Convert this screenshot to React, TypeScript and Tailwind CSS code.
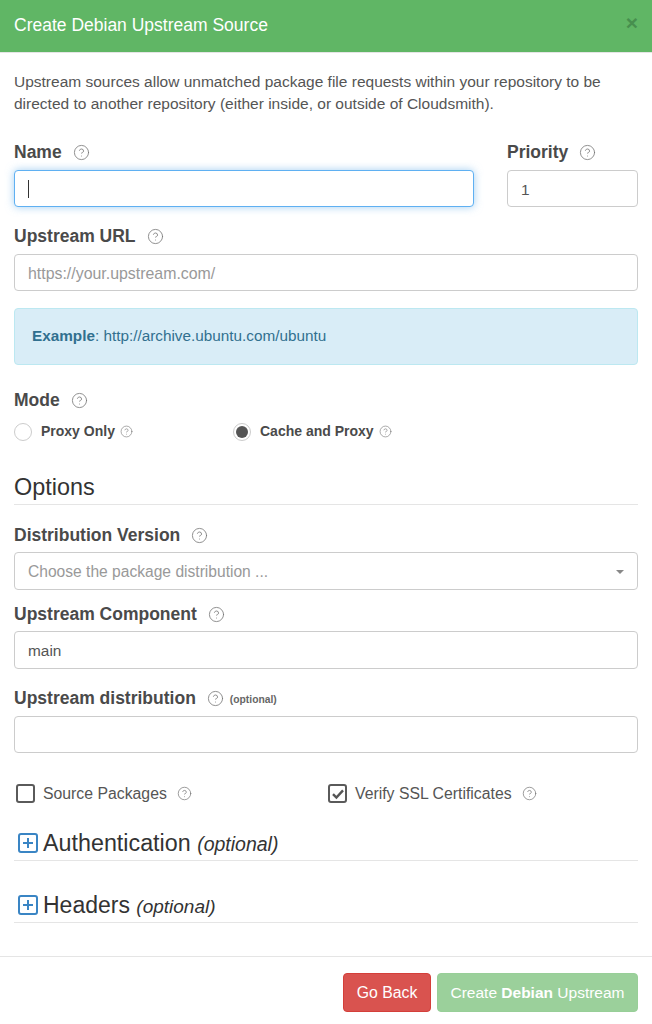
import { CircleHelp } from "lucide-react";

function Help({ size = 17, className = "" }: { size?: number; className?: string }) {
  return <CircleHelp size={size} strokeWidth={1.15} className={`shrink-0 text-[#777] ${className}`} />;
}

function Label({ text, className = "", extra }: { text: string; className?: string; extra?: React.ReactNode }) {
  return (
    <div className={`flex items-center text-[17.5px] leading-[20px] font-bold text-[#4a4a4a] ${className}`}>
      <span>{text}</span>
      <Help className="ml-[11px]" />
      {extra}
    </div>
  );
}

function Field({
  placeholder,
  value,
  focused,
  tall,
  className = "",
}: {
  placeholder?: string;
  value?: string;
  focused?: boolean;
  tall?: boolean;
  className?: string;
}) {
  const border = focused ? "border-[#5fb0f2] shadow-[0_0_8px_rgba(102,175,233,0.6)]" : "border-[#ccc]";
  const height = tall ? "h-[38px]" : "h-[37px]";
  return (
    <input
      readOnly
      placeholder={placeholder}
      value={value ?? ""}
      className={`block w-full rounded-[4px] border bg-white px-[13px] pt-[2px] text-[15.4px] text-[#555] outline-none placeholder:text-[15.9px] placeholder:text-[#999] ${border} ${height} ${className}`}
    />
  );
}

function Plus() {
  return (
    <svg width="20" height="20" viewBox="0 0 20 20" className="shrink-0">
      <rect x="1" y="1" width="18" height="18" rx="2" fill="none" stroke="#3a85c4" strokeWidth="2" />
      <path d="M10 5v10M5 10h10" stroke="#3a85c4" strokeWidth="2" />
    </svg>
  );
}

function Check({ checked }: { checked?: boolean }) {
  return (
    <div className="flex h-[19px] w-[19px] shrink-0 items-center justify-center rounded-[3px] border-2 border-[#5a5a5a] bg-white">
      {checked && (
        <svg width="14" height="12" viewBox="0 0 14 12">
          <path d="M2 6.2l3.4 3.4L12 2.4" fill="none" stroke="#555" strokeWidth="2.4" />
        </svg>
      )}
    </div>
  );
}

function Radio({ checked }: { checked?: boolean }) {
  return (
    <div className="flex h-[18px] w-[18px] shrink-0 items-center justify-center rounded-full border border-[#ccc] bg-white">
      {checked && <div className="h-[12px] w-[12px] rounded-full bg-[#555]" />}
    </div>
  );
}

export default function App() {
  return (
    <div className="flex h-[1024px] w-[652px] flex-col overflow-hidden bg-white font-['Liberation_Sans',Arial,sans-serif] text-[14px] text-[#555]">
      <header className="flex h-[53px] shrink-0 items-center justify-between border-b border-[#e5e5e5] bg-[#60b665] px-[14px]">
        <h1 className="mb-[3px] text-[17.5px] leading-[20px] text-white">Create Debian Upstream Source</h1>
        <span className="mb-[7px] text-[21px] leading-none font-bold text-[#478f4e]">×</span>
      </header>

      <main className="flex-1 px-[14px]">
        <p className="mt-[18px] text-[15.5px] leading-[22px] text-[#555]">
          Upstream sources allow unmatched package file requests within your repository to be directed to another
          repository (either inside, or outside of Cloudsmith).
        </p>

        <div className="mt-[27px] flex gap-[33px]">
          <div className="w-[460px]">
            <Label text="Name" />
            <div className="relative mt-[8px]">
              <Field focused />
              <div className="absolute top-[10px] left-[14px] h-[18px] w-px bg-[#333]" />
            </div>
          </div>
          <div className="w-[131px]">
            <Label text="Priority" />
            <Field value="1" className="mt-[8px]" />
          </div>
        </div>

        <Label text="Upstream URL" className="mt-[19px]" />
        <Field placeholder="https://your.upstream.com/" className="mt-[8px]" />

        <div className="mt-[17px] flex h-[57px] items-center rounded-[4px] border border-[#bce8f1] bg-[#d9edf7] px-[17px] text-[15.3px] text-[#31708f]">
          <span>
            <b>Example</b>: http://archive.ubuntu.com/ubuntu
          </span>
        </div>

        <Label text="Mode" className="mt-[25px]" />
        <div className="mt-[11px] flex items-center text-[14px] font-bold text-[#4a4a4a]">
          <div className="flex w-[219px] items-center">
            <Radio />
            <span className="ml-[9px]">Proxy Only</span>
            <Help size={13} className="ml-[5px]" />
          </div>
          <div className="flex items-center">
            <Radio checked />
            <span className="ml-[9px]">Cache and Proxy</span>
            <Help size={13} className="ml-[5px]" />
          </div>
        </div>

        <h2 className="mt-[30px] border-b border-[#e5e5e5] pb-[2px] text-[23.4px] leading-[30px] text-[#333]">Options</h2>

        <Label text="Distribution Version" className="mt-[20px]" />
        <div className="mt-[7px] flex h-[38px] items-center justify-between rounded-[4px] border border-[#ccc] bg-white px-[13px] pt-[2px] text-[15.6px] text-[#999]">
          <span>Choose the package distribution ...</span>
          <div className="h-0 w-0 border-x-[4px] border-t-[4px] border-x-transparent border-t-[#888]" />
        </div>

        <Label text="Upstream Component" className="mt-[14px]" />
        <Field value="main" tall className="mt-[7px]" />

        <Label
          text="Upstream distribution"
          className="mt-[19px]"
          extra={<span className="ml-[6px] translate-y-[2px] text-[10.3px] leading-[12px] font-bold text-[#666]">(optional)</span>}
        />
        <Field className="mt-[8px]" />

        <div className="mt-[30px] flex items-center text-[15.8px] leading-[21px] text-[#555]">
          <div className="flex w-[314px] items-center pl-[2px]">
            <Check />
            <span className="ml-[8px]">Source Packages</span>
            <Help size={15} className="ml-[10px]" />
          </div>
          <div className="flex items-center">
            <Check checked />
            <span className="ml-[8px]">Verify SSL Certificates</span>
            <Help size={15} className="ml-[10px]" />
          </div>
        </div>

        <div className="mt-[23px] flex h-[34px] items-center gap-[5px] border-b border-[#e5e5e5] pb-[1px] pl-[4px] text-[23.3px] text-[#333]">
          <Plus />
          <span>
            Authentication <i className="text-[19.5px]">(optional)</i>
          </span>
        </div>
        <div className="mt-[28px] flex h-[34px] items-center gap-[5px] border-b border-[#e5e5e5] pb-[1px] pl-[4px] text-[23px] text-[#333]">
          <Plus />
          <span>
            Headers <i className="text-[19px]">(optional)</i>
          </span>
        </div>
      </main>

      <footer className="flex h-[68px] shrink-0 items-start justify-end gap-[6px] border-t border-[#e5e5e5] px-[14px] pt-[16px]">
        <button className="h-[39px] w-[88px] rounded-[4px] border border-[#d43f3a] bg-[#d9534f] text-[15.8px] text-white">
          Go Back
        </button>
        <button className="h-[39px] w-[201px] rounded-[4px] border border-[#98cf98] bg-[#9bd09b] text-[15.5px] text-white">
          Create <b>Debian</b> Upstream
        </button>
      </footer>
    </div>
  );
}
